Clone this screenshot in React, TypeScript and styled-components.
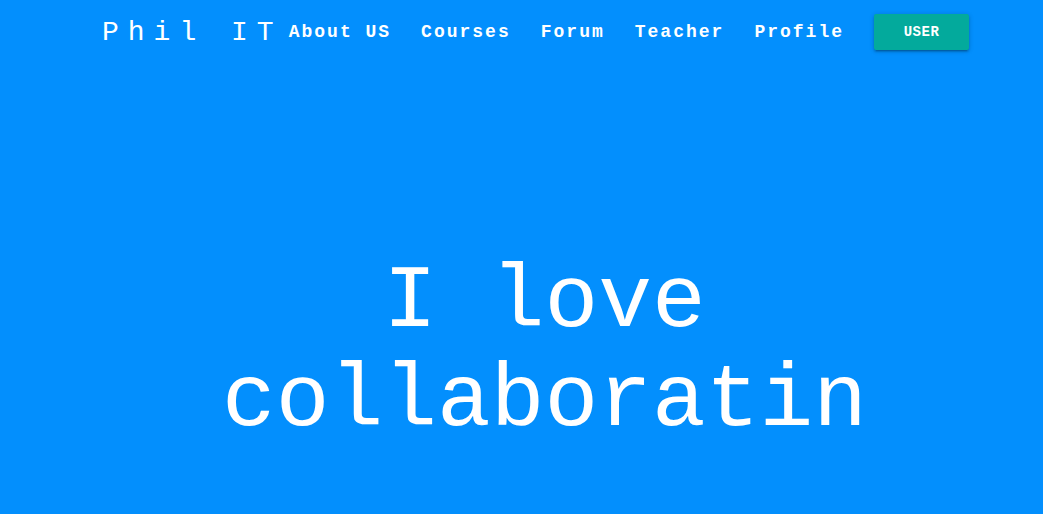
import React from "react";
import styled, { createGlobalStyle } from "styled-components";

const mono = `"Courier New", "Nimbus Mono PS", "FreeMono", "Liberation Mono", monospace`;

const Global = createGlobalStyle`
  html, body { margin: 0; padding: 0; }
  body {
    background: #038ffd;
    font-family: ${mono};
    color: #ffffff;
  }
`;

const Page = styled.div`
  width: 100%;
  height: 514px;
  background: #038ffd;
  display: flex;
  flex-direction: column;
  overflow: hidden;
`;

const Nav = styled.nav`
  height: 64px;
  display: flex;
  align-items: center;
  justify-content: space-between;
  padding: 0 74px 0 102px;
`;

const Brand = styled.a`
  font-family: ${mono};
  font-size: 28px;
  letter-spacing: 9px;
  margin-right: -12px;
  color: #fff;
  text-decoration: none;
  white-space: pre;
`;

const Links = styled.ul`
  display: flex;
  align-items: center;
  list-style: none;
  margin: 0;
  padding: 0;
`;

const LinkItem = styled.li`
  display: flex;
`;

const NavLink = styled.a`
  font-family: ${mono};
  font-weight: bold;
  font-size: 18px;
  letter-spacing: 2px;
  color: #fff;
  text-decoration: none;
  white-space: nowrap;
  padding: 0 15px;
`;

const UserButton = styled.button`
  margin-left: 15px;
  width: 95px;
  height: 36px;
  border: none;
  border-radius: 2px;
  background: #03aa9c;
  color: #fff;
  font-family: ${mono};
  font-weight: bold;
  font-size: 14px;
  letter-spacing: 0.5px;
  box-shadow: 0 2px 2px 0 rgba(0,0,0,0.14), 0 3px 1px -2px rgba(0,0,0,0.12), 0 1px 5px 0 rgba(0,0,0,0.2);
`;

const Hero = styled.section`
  flex: 1;
  display: flex;
  justify-content: center;
  padding: 189px 0 0 46px;
`;

const Headline = styled.h1`
  margin: 0;
  font-family: ${mono};
  font-weight: normal;
  font-size: 89.6px;
  line-height: 99px;
  text-align: center;
  width: 700px;
`;

const links = ["About US", "Courses", "Forum", "Teacher", "Profile"];

export default function App() {
  return (
    <>
      <Global />
      <Page>
        <Nav>
          <Brand href="#">Phil IT</Brand>
          <Links>
            {links.map((l) => (
              <LinkItem key={l}>
                <NavLink href="#">{l}</NavLink>
              </LinkItem>
            ))}
            <LinkItem>
              <UserButton>USER</UserButton>
            </LinkItem>
          </Links>
        </Nav>
        <Hero>
          <Headline>I love collaboratin</Headline>
        </Hero>
      </Page>
    </>
  );
}
